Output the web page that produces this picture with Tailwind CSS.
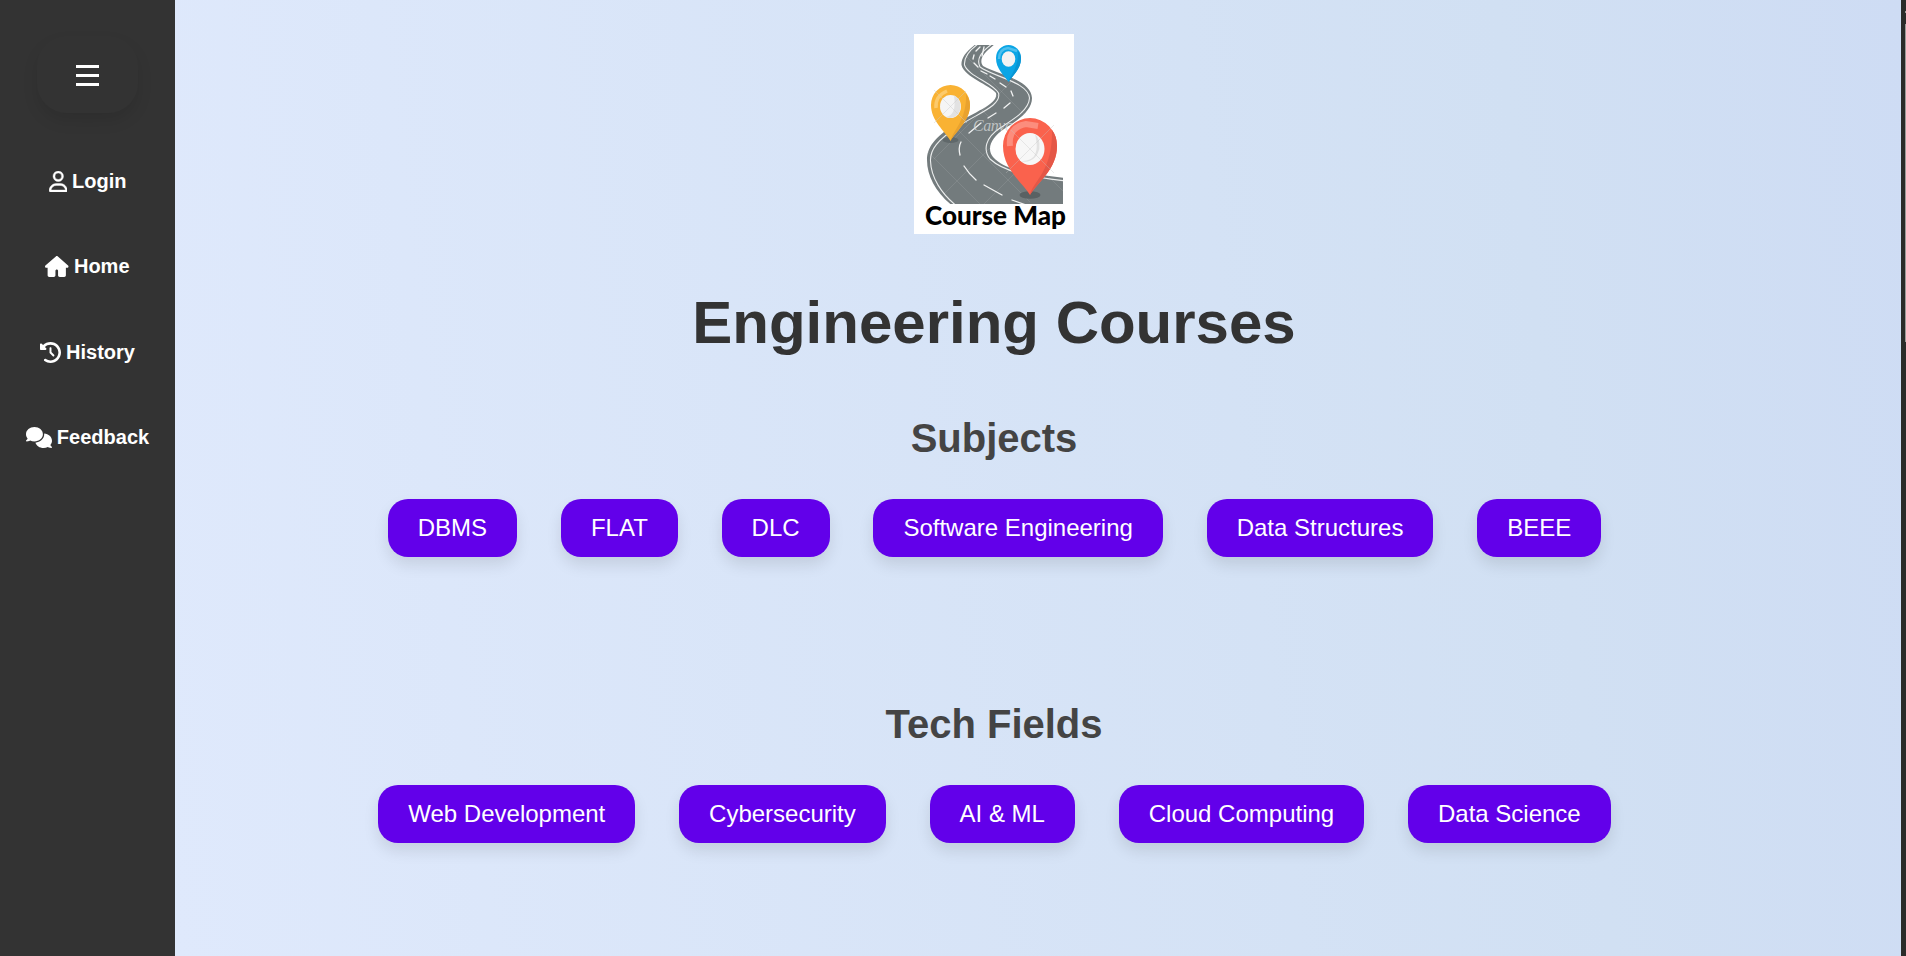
<!DOCTYPE html>
<html lang="en">
<head>
<meta charset="utf-8">
<title>Course Map</title>
<script src="https://cdn.jsdelivr.net/npm/@tailwindcss/browser@4"></script>
</head>
<body class="flex h-screen overflow-hidden bg-[#2a2b29] font-['Liberation_Sans',Arial,sans-serif]">
<aside class="flex w-[175px] shrink-0 flex-col items-center bg-[#333] text-white">
  <button class="mt-[36px] flex h-[77px] w-[101px] items-center justify-center rounded-[30px] shadow-[0_8px_15px_rgba(0,0,0,0.1)]">
    <svg class="mt-px h-[21px] w-[23px]" viewBox="0 0 23 21" fill="#fff"><path d="M0 0h23v3H0zM0 9h23v3H0zM0 18h23v3H0z"/></svg>
  </button>
  <nav class="mt-[52px] flex flex-col items-center gap-[52.4px] text-xl leading-[33px] font-bold">
    <a class="flex h-[33px] items-center gap-[5px]"><svg class="h-[21px] w-[18.5px]" viewBox="0 0 448 512" fill="#fff" stroke="#fff" stroke-width="10"><path d="M304 128a80 80 0 1 0-160 0 80 80 0 1 0 160 0zM96 128a128 128 0 1 1 256 0A128 128 0 1 1 96 128zM49.3 464H398.700c-8.900-63.300-63.300-112-129-112H178.300c-65.700 0-120.100 48.700-129 112zM0 482.300C0 383.800 79.800 304 178.300 304h91.400C368.200 304 448 383.800 448 482.300c0 16.400-13.300 29.700-29.700 29.700H29.700C13.300 512 0 498.700 0 482.300z"/></svg>Login</a>
    <a class="flex h-[33px] items-center gap-[5px]"><svg class="h-[21px] w-[23.500px]" viewBox="0 0 576 512" fill="#fff"><path d="M575.800 255.500c0 18-15 32.100-32 32.100h-32l.7 160.200c0 2.700-.2 5.400-.5 8.100V472c0 22.100-17.900 40-40 40H360c-22.100 0-40-17.900-40-40V360c0-17.700-14.300-32-32-32s-32 14.300-32 32v112c0 22.100-17.900 40-40 40H104c-22.100 0-40-17.900-40-40V287.600H32c-18 0-32-14-32-32.100 0-9 3-17 10-24L266.400 8c7-7 15-8 22-8s15 2 21 7L564.800 231.500c8 7 12 15 11 24z"/></svg>Home</a>
    <a class="flex h-[33px] items-center gap-[5px]"><svg class="h-[21px] w-[21px]" viewBox="0 0 512 512" fill="#fff"><path d="M75 75L41 41C25.900 25.900 0 36.600 0 57.900V168c0 13.300 10.700 24 24 24H134.100c21.400 0 32.100-25.900 17-41l-30.800-30.800C155 85.500 203 64 256 64c106 0 192 86 192 192s-86 192-192 192c-40.800 0-78.600-12.700-109.700-34.400-14.500-10.100-34.400-6.600-44.600 7.900s-6.600 34.400 7.900 44.600C151.200 495 201.700 512 256 512c141.400 0 256-114.600 256-256S397.400 0 256 0C185.300 0 121.300 28.700 75 75zm181 53c-13.300 0-24 10.700-24 24V256c0 6.400 2.500 12.500 7 17l72 72c9.400 9.400 24.600 9.400 33.900 0s9.400-24.600 0-33.900l-65-65V152c0-13.300-10.700-24-24-24z"/></svg>History</a>
    <a class="flex h-[33px] items-center gap-[5px]"><svg class="h-[21px] w-[26px]" viewBox="0 0 640 512" fill="#fff"><path d="M208 352c114.900 0 208-78.800 208-176S322.900 0 208 0 0 78.800 0 176c0 38.600 14.700 74.300 39.600 103.400-3.500 9.400-8.700 17.700-14.200 24.700-4.800 6.200-9.700 11-13.300 14.300-1.800 1.600-3.300 2.900-4.300 3.700-.5 .4-.9 .7-1.100 .8l-.2 .2C1 327.200-1.400 334.400 .8 340.900S9.100 352 16 352c21.800 0 43.800-5.600 62.100-12.500 9.200-3.500 17.800-7.400 25.200-11.400C134.100 343.300 169.800 352 208 352zM448 176c0 112.300-99.100 196.900-216.500 207C255.800 457.400 336.400 512 432 512c38.200 0 73.900-8.700 104.700-23.900 7.500 4 16 7.900 25.200 11.400 18.300 6.900 40.300 12.500 62.100 12.500 6.900 0 13.100-4.500 15.200-11.100 2.100-6.600-.2-13.800-5.800-17.900l-.2-.2c-.2-.2-.6-.4-1.100-.8-1-.8-2.500-2-4.300-3.700-3.600-3.300-8.500-8.100-13.300-14.300-5.500-7-10.700-15.400-14.200-24.700 24.900-29 39.600-64.700 39.600-103.400 0-92.800-84.900-168.900-192.600-175.500.4 5.100 .6 10.300 .6 15.500z"/></svg>Feedback</a>
  </nav>
</aside>
<main class="flex w-[1726px] shrink-0 flex-col items-center bg-[linear-gradient(83deg,#dfe9fc_0%,#d1e0f3_78%,#cedcf4_100%)] pt-[34px] pr-[88px]">
  <svg class="h-[200px] w-[160px] shrink-0 bg-white" viewBox="0 0 160 200">
    <defs><clipPath id="area"><rect x="10" y="11" width="139" height="159"/></clipPath></defs>
    <g clip-path="url(#area)">
      <path d="M62 10C51 18 47 25 47.500 31C50 43 76 51 82 59C85 70 60 78 42 90C20 103 13 114 13 126C13 143 23 160 40 173H152V144C126 141 92 138 79 123C72 114 78 103 90 95C106 85 118 76 118 64C117 46 86 41 69 32C64 25 71 18 81 10Z" fill="#737b7d"/>
      <path d="M64 10C53 18 50 25 50.500 31C54 42 79 49 84.500 59C88 72 62 80 45 92C23 106 16 116 16.500 127C17 143 27 160 44 173M78 10C67 18 62 25 66 33C80 43 114 48 115.500 64C115 76 100 85 86 94C71 104 69 116 76 125C92 140 126 144 152 147" fill="none" stroke="#eceeee" stroke-width="1.100"/>
      <path d="M66 13L62 17M60 21L59 25M60 29L64 33M67 37L73 40M76 42L81 45M86 49L92 53M97 57L99 62M96 69L90 74M82 79L74 84M67 89L55 99M47 108Q44 113 46 121M50 132Q55 140 62 146M70 151L88 161M98 166L112 171M68 22L70 13" fill="none" stroke="#f1f2f2" stroke-width="1.300" stroke-linecap="round"/>
      <path d="M14 118L66 170M40 92L116 168M62 70L149 157M50 20L120 90M30 160L118 72M70 170L149 91M20 125L118 27" fill="none" stroke="#fff" stroke-opacity=".16" stroke-width=".6"/>
    </g>
    <ellipse cx="36.500" cy="106" rx="8" ry="3" fill="#60686a"/>
    <path d="M36.500 107C31 97 17 87 17 71A19.500 20 0 0 1 56 71C56 87 42 97 36.500 107Z" fill="#f9b233"/>
    <path d="M36.500 107C39 96 53 86 52 60Q56 65 56 71C56 87 42 97 36.500 107Z" fill="#e9a22e"/>
    <path d="M22 74Q21 62 33 57" fill="none" stroke="#fcca6b" stroke-width="3.500"/>
    <ellipse cx="36.500" cy="72.500" rx="10.500" ry="11.500" fill="#f5f5f5"/>
    <path d="M40 61.500A10.500 11.500 0 0 1 32 83Q43 81 40 61.500Z" fill="#e2e2e2"/>
    <path d="M20 56L53 89M52 57L20 89" stroke="#c9c9c9" stroke-opacity=".6" stroke-width=".7"/>
    <path d="M94.500 48C90 41 82 35 82 24A12.500 13 0 0 1 107 24C107 35 99 41 94.500 48Z" fill="#0ba5e5"/>
    <path d="M94.500 48C96 41 105 34 104 17Q107 20 107 25C107 35 99 41 94.500 48Z" fill="#0995d3"/>
    <path d="M85 25Q85 15 94 14L103 17" fill="none" stroke="#4dc0ee" stroke-width="2.500"/>
    <ellipse cx="94.500" cy="25" rx="6.800" ry="7.700" fill="#f3f3f3"/>
    <text x="59" y="97" font-family="Liberation Serif,serif" font-style="italic" font-size="16" textLength="40" fill="#d6dada" fill-opacity=".75">Canva</text>
    <ellipse cx="116" cy="161" rx="10.500" ry="3.800" fill="#596163"/>
    <path d="M116 161C108 148 89 135 89 112A27 28 0 0 1 143 112C143 135 124 148 116 161Z" fill="#fa624d"/>
    <path d="M116 161C119 147 139 137 138 96Q143 102 143 112C143 135 124 148 116 161Z" fill="#e45747"/>
    <path d="M96 112Q94 93 112 90L124 92" fill="none" stroke="#fc8d7d" stroke-width="6"/>
    <ellipse cx="116" cy="115" rx="14.500" ry="16" fill="#f7f7f7"/>
    <path d="M121 100A14.500 16 0 0 1 107 127Q128 128 121 100Z" fill="#e2e2e2"/>
    <path d="M97 96L140 139M140 91L92 139" stroke="#c4c4c4" stroke-opacity=".5" stroke-width=".7"/>
    <text x="11" y="191" font-family="Lato,sans-serif" font-weight="900" font-size="26" textLength="141" lengthAdjust="spacingAndGlyphs" fill="#000">Course Map</text>
  </svg>
  <h1 class="mt-[55px] text-[60px] leading-[68px] font-bold text-[#333]">Engineering Courses</h1>
  <h2 class="mt-[58px] text-[40px] leading-[46px] font-bold text-[#444]">Subjects</h2>
  <div class="mt-[38px] flex gap-[43.800px] pl-[1px] text-2xl leading-[28px] text-white">
    <button class="rounded-[20px] bg-[#6200ea] px-[30px] py-[15px] shadow-[0_8px_15px_rgba(0,0,0,0.1)]">DBMS</button>
    <button class="rounded-[20px] bg-[#6200ea] px-[30px] py-[15px] shadow-[0_8px_15px_rgba(0,0,0,0.1)]">FLAT</button>
    <button class="rounded-[20px] bg-[#6200ea] px-[30px] py-[15px] shadow-[0_8px_15px_rgba(0,0,0,0.1)]">DLC</button>
    <button class="rounded-[20px] bg-[#6200ea] px-[30px] py-[15px] shadow-[0_8px_15px_rgba(0,0,0,0.1)]">Software Engineering</button>
    <button class="rounded-[20px] bg-[#6200ea] px-[30px] py-[15px] shadow-[0_8px_15px_rgba(0,0,0,0.1)]">Data Structures</button>
    <button class="rounded-[20px] bg-[#6200ea] px-[30px] py-[15px] shadow-[0_8px_15px_rgba(0,0,0,0.1)]">BEEE</button>
  </div>
  <h2 class="mt-[144px] text-[40px] leading-[46px] font-bold text-[#444]">Tech Fields</h2>
  <div class="mt-[38px] flex gap-[43.800px] pl-[1px] text-2xl leading-[28px] text-white">
    <button class="rounded-[20px] bg-[#6200ea] px-[30px] py-[15px] shadow-[0_8px_15px_rgba(0,0,0,0.1)]">Web Development</button>
    <button class="rounded-[20px] bg-[#6200ea] px-[30px] py-[15px] shadow-[0_8px_15px_rgba(0,0,0,0.1)]">Cybersecurity</button>
    <button class="rounded-[20px] bg-[#6200ea] px-[30px] py-[15px] shadow-[0_8px_15px_rgba(0,0,0,0.1)]">AI &amp; ML</button>
    <button class="rounded-[20px] bg-[#6200ea] px-[30px] py-[15px] shadow-[0_8px_15px_rgba(0,0,0,0.1)]">Cloud Computing</button>
    <button class="rounded-[20px] bg-[#6200ea] px-[30px] py-[15px] shadow-[0_8px_15px_rgba(0,0,0,0.1)]">Data Science</button>
  </div>
</main>
<div class="flex flex-1 flex-col items-end">
  <div class="mt-[11px] h-[2px] w-px bg-[#9b9b98]"></div>
  <div class="mt-[11px] h-[318px] w-px bg-[#9b9b98]"></div>
</div>
</body>
</html>
